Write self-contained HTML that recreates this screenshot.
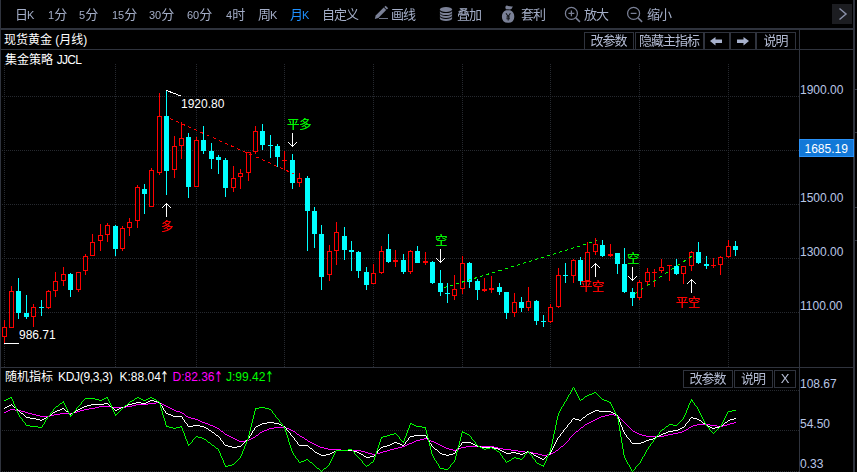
<!DOCTYPE html>
<html><head><meta charset="utf-8"><title>现货黄金 月线</title>
<style>
html,body{margin:0;padding:0;background:#000;}
#w{position:relative;width:857px;height:472px;background:#000;overflow:hidden;font-family:"Liberation Sans","Noto Sans CJK SC",sans-serif;font-size:12px;line-height:14px;color:#fff;}
#w svg{position:absolute;left:0;top:0;}
.t{position:absolute;white-space:nowrap;}
.tb,.bt,.g{will-change:transform;}
.g{text-shadow:0 0 0 currentColor;font-size:12.5px;letter-spacing:-0.5px;margin-top:-0.5px;}
.tb{color:#a4aec8;top:7.5px;font-size:13px;letter-spacing:-1px;}
.tb i{font-style:normal;font-size:11px;letter-spacing:0;}
.bt{position:absolute;top:32px;height:16px;border:1px solid #2f333d;color:#b4bcd4;text-align:center;line-height:16px;box-sizing:content-box;font-size:13px;letter-spacing:-1px;text-indent:-1px;}
.ax{position:absolute;left:800px;color:#b9c6e6;}
.ar{display:inline-block;font-family:'DejaVu Sans',sans-serif;font-size:15px;transform:scaleX(.7);transform-origin:0 50%;width:6px;position:relative;top:0.5px;left:-0.5px;line-height:10px}
</style></head><body><div id="w">

<svg width="857" height="472" viewBox="0 0 857 472" shape-rendering="crispEdges"><g stroke="#26292f" stroke-width="1" stroke-dasharray="1 1" fill="none">
<line x1="2" y1="96.5" x2="799" y2="96.5"/>
<line x1="2" y1="150.5" x2="799" y2="150.5"/>
<line x1="2" y1="204.5" x2="799" y2="204.5"/>
<line x1="2" y1="258.5" x2="799" y2="258.5"/>
<line x1="2" y1="312.5" x2="799" y2="312.5"/>
<line x1="2" y1="390.5" x2="799" y2="390.5"/>
<line x1="2" y1="430.5" x2="799" y2="430.5"/>
<line x1="2" y1="471.5" x2="799" y2="471.5"/>
<line x1="4.5" y1="64" x2="4.5" y2="367"/>
<line x1="115.5" y1="64" x2="115.5" y2="367"/>
<line x1="196.5" y1="64" x2="196.5" y2="367"/>
<line x1="284.5" y1="64" x2="284.5" y2="367"/>
<line x1="373.5" y1="64" x2="373.5" y2="367"/>
<line x1="462.5" y1="64" x2="462.5" y2="367"/>
<line x1="550.5" y1="64" x2="550.5" y2="367"/>
<line x1="639.5" y1="64" x2="639.5" y2="367"/>
<line x1="728.5" y1="64" x2="728.5" y2="367"/>
</g>
<rect x="0" y="0" width="1" height="472" fill="#2f333d" />
<rect x="0" y="28" width="855" height="2" fill="#2f333d" />
<rect x="0" y="49" width="854" height="1" fill="#2f333d" />
<rect x="0" y="367" width="854" height="1" fill="#2f333d" />
<rect x="799" y="30" width="1" height="442" fill="#2f333d" />
<rect x="853" y="0" width="2" height="472" fill="#2f333d" />
<rect x="855" y="89" width="2" height="1" fill="#2f333d" />
<rect x="855" y="132" width="2" height="1" fill="#2f333d" />
<rect x="855" y="207" width="2" height="1" fill="#2f333d" />
<rect x="855" y="240" width="2" height="1" fill="#2f333d" />
<rect x="4" y="320" width="1" height="23" fill="#ff0000" />
<rect x="2" y="327" width="5" height="10" fill="#ff0000" />
<rect x="3" y="328" width="3" height="8" fill="#000" />
<rect x="11" y="286" width="1" height="42" fill="#ff0000" />
<rect x="9" y="291" width="5" height="37" fill="#ff0000" />
<rect x="10" y="292" width="3" height="35" fill="#000" />
<rect x="18" y="278" width="1" height="41" fill="#00ffff" />
<rect x="16" y="291" width="5" height="22" fill="#00ffff" />
<rect x="26" y="295" width="1" height="24" fill="#00ffff" />
<rect x="24" y="313" width="5" height="4" fill="#00ffff" />
<rect x="33" y="304" width="1" height="23" fill="#ff0000" />
<rect x="31" y="307" width="5" height="10" fill="#ff0000" />
<rect x="32" y="308" width="3" height="8" fill="#000" />
<rect x="41" y="300" width="1" height="16" fill="#00ffff" />
<rect x="39" y="307" width="5" height="1" fill="#00ffff" />
<rect x="48" y="290" width="1" height="19" fill="#ff0000" />
<rect x="46" y="291" width="5" height="17" fill="#ff0000" />
<rect x="47" y="292" width="3" height="15" fill="#000" />
<rect x="55" y="272" width="1" height="25" fill="#ff0000" />
<rect x="53" y="281" width="5" height="10" fill="#ff0000" />
<rect x="54" y="282" width="3" height="8" fill="#000" />
<rect x="63" y="267" width="1" height="19" fill="#ff0000" />
<rect x="61" y="274" width="5" height="7" fill="#ff0000" />
<rect x="62" y="275" width="3" height="5" fill="#000" />
<rect x="70" y="273" width="1" height="24" fill="#00ffff" />
<rect x="68" y="274" width="5" height="16" fill="#00ffff" />
<rect x="78" y="272" width="1" height="20" fill="#ff0000" />
<rect x="76" y="272" width="5" height="18" fill="#ff0000" />
<rect x="77" y="273" width="3" height="16" fill="#000" />
<rect x="85" y="254" width="1" height="21" fill="#ff0000" />
<rect x="83" y="256" width="5" height="15" fill="#ff0000" />
<rect x="84" y="257" width="3" height="13" fill="#000" />
<rect x="92" y="234" width="1" height="22" fill="#ff0000" />
<rect x="90" y="242" width="5" height="14" fill="#ff0000" />
<rect x="91" y="243" width="3" height="12" fill="#000" />
<rect x="100" y="224" width="1" height="27" fill="#ff0000" />
<rect x="98" y="235" width="5" height="6" fill="#ff0000" />
<rect x="99" y="236" width="3" height="4" fill="#000" />
<rect x="107" y="223" width="1" height="19" fill="#ff0000" />
<rect x="105" y="225" width="5" height="10" fill="#ff0000" />
<rect x="106" y="226" width="3" height="8" fill="#000" />
<rect x="115" y="225" width="1" height="31" fill="#00ffff" />
<rect x="113" y="226" width="5" height="23" fill="#00ffff" />
<rect x="122" y="226" width="1" height="25" fill="#ff0000" />
<rect x="120" y="228" width="5" height="21" fill="#ff0000" />
<rect x="121" y="229" width="3" height="19" fill="#000" />
<rect x="129" y="218" width="1" height="18" fill="#ff0000" />
<rect x="127" y="222" width="5" height="6" fill="#ff0000" />
<rect x="128" y="223" width="3" height="4" fill="#000" />
<rect x="137" y="185" width="1" height="43" fill="#ff0000" />
<rect x="135" y="187" width="5" height="34" fill="#ff0000" />
<rect x="136" y="188" width="3" height="32" fill="#000" />
<rect x="144" y="184" width="1" height="30" fill="#00ffff" />
<rect x="142" y="189" width="5" height="5" fill="#00ffff" />
<rect x="151" y="168" width="1" height="39" fill="#ff0000" />
<rect x="149" y="170" width="5" height="37" fill="#ff0000" />
<rect x="150" y="171" width="3" height="35" fill="#000" />
<rect x="159" y="93" width="1" height="82" fill="#ff0000" />
<rect x="157" y="116" width="5" height="57" fill="#ff0000" />
<rect x="158" y="117" width="3" height="55" fill="#000" />
<rect x="166" y="90" width="1" height="105" fill="#00ffff" />
<rect x="164" y="116" width="5" height="55" fill="#00ffff" />
<rect x="174" y="136" width="1" height="42" fill="#ff0000" />
<rect x="172" y="146" width="5" height="24" fill="#ff0000" />
<rect x="173" y="147" width="3" height="22" fill="#000" />
<rect x="181" y="122" width="1" height="37" fill="#ff0000" />
<rect x="179" y="138" width="5" height="8" fill="#ff0000" />
<rect x="180" y="139" width="3" height="6" fill="#000" />
<rect x="188" y="133" width="1" height="65" fill="#00ffff" />
<rect x="186" y="137" width="5" height="50" fill="#00ffff" />
<rect x="196" y="137" width="1" height="50" fill="#ff0000" />
<rect x="194" y="140" width="5" height="47" fill="#ff0000" />
<rect x="195" y="141" width="3" height="45" fill="#000" />
<rect x="203" y="126" width="1" height="28" fill="#00ffff" />
<rect x="201" y="140" width="5" height="11" fill="#00ffff" />
<rect x="211" y="143" width="1" height="26" fill="#00ffff" />
<rect x="209" y="151" width="5" height="8" fill="#00ffff" />
<rect x="218" y="155" width="1" height="19" fill="#00ffff" />
<rect x="216" y="157" width="5" height="3" fill="#00ffff" />
<rect x="225" y="158" width="1" height="39" fill="#00ffff" />
<rect x="223" y="160" width="5" height="28" fill="#00ffff" />
<rect x="233" y="166" width="1" height="26" fill="#ff0000" />
<rect x="231" y="178" width="5" height="10" fill="#ff0000" />
<rect x="232" y="179" width="3" height="8" fill="#000" />
<rect x="240" y="169" width="1" height="20" fill="#ff0000" />
<rect x="238" y="173" width="5" height="4" fill="#ff0000" />
<rect x="239" y="174" width="3" height="2" fill="#000" />
<rect x="248" y="152" width="1" height="29" fill="#ff0000" />
<rect x="246" y="152" width="5" height="21" fill="#ff0000" />
<rect x="247" y="153" width="3" height="19" fill="#000" />
<rect x="255" y="126" width="1" height="28" fill="#ff0000" />
<rect x="253" y="131" width="5" height="21" fill="#ff0000" />
<rect x="254" y="132" width="3" height="19" fill="#000" />
<rect x="262" y="124" width="1" height="26" fill="#00ffff" />
<rect x="260" y="131" width="5" height="14" fill="#00ffff" />
<rect x="270" y="135" width="1" height="23" fill="#00ffff" />
<rect x="268" y="145" width="5" height="1" fill="#00ffff" />
<rect x="277" y="144" width="1" height="23" fill="#00ffff" />
<rect x="275" y="146" width="5" height="11" fill="#00ffff" />
<rect x="284" y="151" width="1" height="19" fill="#ff0000" />
<rect x="282" y="160" width="5" height="1" fill="#ff0000" />
<rect x="292" y="154" width="1" height="35" fill="#00ffff" />
<rect x="290" y="160" width="5" height="23" fill="#00ffff" />
<rect x="299" y="173" width="1" height="14" fill="#ff0000" />
<rect x="297" y="178" width="5" height="5" fill="#ff0000" />
<rect x="298" y="179" width="3" height="3" fill="#000" />
<rect x="307" y="176" width="1" height="75" fill="#00ffff" />
<rect x="305" y="178" width="5" height="33" fill="#00ffff" />
<rect x="314" y="207" width="1" height="41" fill="#00ffff" />
<rect x="312" y="211" width="5" height="23" fill="#00ffff" />
<rect x="321" y="225" width="1" height="65" fill="#00ffff" />
<rect x="319" y="234" width="5" height="43" fill="#00ffff" />
<rect x="329" y="245" width="1" height="36" fill="#ff0000" />
<rect x="327" y="251" width="5" height="24" fill="#ff0000" />
<rect x="328" y="252" width="3" height="22" fill="#000" />
<rect x="336" y="222" width="1" height="43" fill="#ff0000" />
<rect x="334" y="232" width="5" height="19" fill="#ff0000" />
<rect x="335" y="233" width="3" height="17" fill="#000" />
<rect x="344" y="227" width="1" height="33" fill="#00ffff" />
<rect x="342" y="236" width="5" height="14" fill="#00ffff" />
<rect x="351" y="241" width="1" height="30" fill="#00ffff" />
<rect x="349" y="250" width="5" height="2" fill="#00ffff" />
<rect x="358" y="251" width="1" height="27" fill="#00ffff" />
<rect x="356" y="252" width="5" height="19" fill="#00ffff" />
<rect x="366" y="267" width="1" height="23" fill="#00ffff" />
<rect x="364" y="272" width="5" height="13" fill="#00ffff" />
<rect x="373" y="264" width="1" height="20" fill="#ff0000" />
<rect x="371" y="273" width="5" height="11" fill="#ff0000" />
<rect x="372" y="274" width="3" height="9" fill="#000" />
<rect x="381" y="246" width="1" height="28" fill="#ff0000" />
<rect x="379" y="251" width="5" height="22" fill="#ff0000" />
<rect x="380" y="252" width="3" height="20" fill="#000" />
<rect x="388" y="234" width="1" height="29" fill="#00ffff" />
<rect x="386" y="249" width="5" height="13" fill="#00ffff" />
<rect x="395" y="250" width="1" height="17" fill="#ff0000" />
<rect x="393" y="260" width="5" height="2" fill="#ff0000" />
<rect x="403" y="254" width="1" height="20" fill="#00ffff" />
<rect x="401" y="260" width="5" height="12" fill="#00ffff" />
<rect x="410" y="250" width="1" height="24" fill="#ff0000" />
<rect x="408" y="251" width="5" height="21" fill="#ff0000" />
<rect x="409" y="252" width="3" height="19" fill="#000" />
<rect x="417" y="246" width="1" height="17" fill="#00ffff" />
<rect x="415" y="251" width="5" height="12" fill="#00ffff" />
<rect x="425" y="252" width="1" height="13" fill="#ff0000" />
<rect x="423" y="261" width="5" height="2" fill="#ff0000" />
<rect x="432" y="261" width="1" height="23" fill="#00ffff" />
<rect x="430" y="262" width="5" height="21" fill="#00ffff" />
<rect x="440" y="270" width="1" height="26" fill="#00ffff" />
<rect x="438" y="283" width="5" height="9" fill="#00ffff" />
<rect x="447" y="283" width="1" height="20" fill="#00ffff" />
<rect x="445" y="293" width="5" height="1" fill="#00ffff" />
<rect x="454" y="275" width="1" height="25" fill="#ff0000" />
<rect x="452" y="289" width="5" height="7" fill="#ff0000" />
<rect x="453" y="290" width="3" height="5" fill="#000" />
<rect x="462" y="256" width="1" height="38" fill="#ff0000" />
<rect x="460" y="263" width="5" height="26" fill="#ff0000" />
<rect x="461" y="264" width="3" height="24" fill="#000" />
<rect x="469" y="262" width="1" height="26" fill="#00ffff" />
<rect x="467" y="263" width="5" height="19" fill="#00ffff" />
<rect x="477" y="279" width="1" height="21" fill="#00ffff" />
<rect x="475" y="281" width="5" height="9" fill="#00ffff" />
<rect x="484" y="278" width="1" height="14" fill="#ff0000" />
<rect x="482" y="289" width="5" height="2" fill="#ff0000" />
<rect x="491" y="276" width="1" height="17" fill="#ff0000" />
<rect x="489" y="288" width="5" height="2" fill="#ff0000" />
<rect x="499" y="283" width="1" height="12" fill="#00ffff" />
<rect x="497" y="287" width="5" height="5" fill="#00ffff" />
<rect x="506" y="292" width="1" height="27" fill="#00ffff" />
<rect x="504" y="292" width="5" height="21" fill="#00ffff" />
<rect x="514" y="293" width="1" height="24" fill="#ff0000" />
<rect x="512" y="302" width="5" height="11" fill="#ff0000" />
<rect x="513" y="303" width="3" height="9" fill="#000" />
<rect x="521" y="297" width="1" height="15" fill="#00ffff" />
<rect x="519" y="302" width="5" height="6" fill="#00ffff" />
<rect x="528" y="287" width="1" height="24" fill="#ff0000" />
<rect x="526" y="301" width="5" height="7" fill="#ff0000" />
<rect x="527" y="302" width="3" height="5" fill="#000" />
<rect x="536" y="300" width="1" height="25" fill="#00ffff" />
<rect x="534" y="301" width="5" height="20" fill="#00ffff" />
<rect x="543" y="315" width="1" height="12" fill="#00ffff" />
<rect x="541" y="321" width="5" height="1" fill="#00ffff" />
<rect x="550" y="304" width="1" height="19" fill="#ff0000" />
<rect x="548" y="307" width="5" height="15" fill="#ff0000" />
<rect x="549" y="308" width="3" height="13" fill="#000" />
<rect x="558" y="268" width="1" height="40" fill="#ff0000" />
<rect x="556" y="275" width="5" height="32" fill="#ff0000" />
<rect x="557" y="276" width="3" height="30" fill="#000" />
<rect x="565" y="263" width="1" height="20" fill="#00ffff" />
<rect x="563" y="275" width="5" height="1" fill="#00ffff" />
<rect x="573" y="259" width="1" height="24" fill="#ff0000" />
<rect x="571" y="260" width="5" height="16" fill="#ff0000" />
<rect x="572" y="261" width="3" height="14" fill="#000" />
<rect x="580" y="257" width="1" height="28" fill="#00ffff" />
<rect x="578" y="260" width="5" height="21" fill="#00ffff" />
<rect x="587" y="242" width="1" height="39" fill="#ff0000" />
<rect x="585" y="252" width="5" height="29" fill="#ff0000" />
<rect x="586" y="253" width="3" height="27" fill="#000" />
<rect x="595" y="238" width="1" height="17" fill="#ff0000" />
<rect x="593" y="244" width="5" height="8" fill="#ff0000" />
<rect x="594" y="245" width="3" height="6" fill="#000" />
<rect x="602" y="240" width="1" height="17" fill="#00ffff" />
<rect x="600" y="245" width="5" height="11" fill="#00ffff" />
<rect x="610" y="244" width="1" height="13" fill="#ff0000" />
<rect x="608" y="254" width="5" height="2" fill="#ff0000" />
<rect x="617" y="253" width="1" height="21" fill="#00ffff" />
<rect x="615" y="253" width="5" height="11" fill="#00ffff" />
<rect x="624" y="248" width="1" height="45" fill="#00ffff" />
<rect x="622" y="264" width="5" height="28" fill="#00ffff" />
<rect x="632" y="288" width="1" height="18" fill="#00ffff" />
<rect x="630" y="292" width="5" height="6" fill="#00ffff" />
<rect x="639" y="280" width="1" height="20" fill="#ff0000" />
<rect x="637" y="282" width="5" height="16" fill="#ff0000" />
<rect x="638" y="283" width="3" height="14" fill="#000" />
<rect x="647" y="268" width="1" height="17" fill="#ff0000" />
<rect x="645" y="272" width="5" height="10" fill="#ff0000" />
<rect x="646" y="273" width="3" height="8" fill="#000" />
<rect x="654" y="269" width="1" height="18" fill="#ff0000" />
<rect x="652" y="272" width="5" height="1" fill="#ff0000" />
<rect x="661" y="259" width="1" height="14" fill="#ff0000" />
<rect x="659" y="267" width="5" height="4" fill="#ff0000" />
<rect x="660" y="268" width="3" height="2" fill="#000" />
<rect x="669" y="265" width="1" height="16" fill="#ff0000" />
<rect x="667" y="265" width="5" height="1" fill="#ff0000" />
<rect x="676" y="259" width="1" height="16" fill="#00ffff" />
<rect x="674" y="266" width="5" height="8" fill="#00ffff" />
<rect x="683" y="266" width="1" height="18" fill="#ff0000" />
<rect x="681" y="266" width="5" height="8" fill="#ff0000" />
<rect x="682" y="267" width="3" height="6" fill="#000" />
<rect x="691" y="251" width="1" height="20" fill="#ff0000" />
<rect x="689" y="252" width="5" height="14" fill="#ff0000" />
<rect x="690" y="253" width="3" height="12" fill="#000" />
<rect x="698" y="242" width="1" height="22" fill="#00ffff" />
<rect x="696" y="252" width="5" height="11" fill="#00ffff" />
<rect x="706" y="256" width="1" height="13" fill="#00ffff" />
<rect x="704" y="264" width="5" height="2" fill="#00ffff" />
<rect x="713" y="258" width="1" height="10" fill="#ff0000" />
<rect x="711" y="265" width="5" height="1" fill="#ff0000" />
<rect x="720" y="256" width="1" height="19" fill="#ff0000" />
<rect x="718" y="257" width="5" height="8" fill="#ff0000" />
<rect x="719" y="258" width="3" height="6" fill="#000" />
<rect x="728" y="240" width="1" height="18" fill="#ff0000" />
<rect x="726" y="246" width="5" height="11" fill="#ff0000" />
<rect x="727" y="247" width="3" height="9" fill="#000" />
<rect x="735" y="241" width="1" height="15" fill="#00ffff" />
<rect x="733" y="246" width="5" height="4" fill="#00ffff" />
<line x1="170" y1="118.5" x2="294" y2="173.9" stroke="#ff0000" stroke-width="1" stroke-dasharray="3 3.7"/>
<line x1="444" y1="287.7" x2="597" y2="240.7" stroke="#00ff00" stroke-width="1" stroke-dasharray="3 3.34"/>
<line x1="635" y1="293.5" x2="692" y2="256" stroke="#00ff00" stroke-width="1" stroke-dasharray="3 4.25"/>
<g stroke="#fff" stroke-width="1" fill="none">
<polyline points="166.5,91 166.5,90.5 181,96"/>
<line x1="4" y1="343.5" x2="19" y2="343.5"/>
<path d="M166.5 203 V217 M162 208 L166.5 203.5 L171 208"/>
<path d="M595.5 263 V277 M591 268 L595.5 263.5 L600 268"/>
<path d="M691.5 279 V293 M687 284 L691.5 279.5 L696 284"/>
<path d="M292.5 133 V147 M288 142 L292.5 146.5 L297 142"/>
<path d="M440.5 249 V263 M436 258 L440.5 262.5 L445 258"/>
<path d="M632.5 267 V281 M628 276 L632.5 280.5 L637 276"/>
</g>
<path fill="#ff00ff" d="M320 447h4v1h-4zM398 447h4v1h-4zM444 447h2v1h-2zM461 447h5v1h-5zM494 447h4v1h-4zM217 428h2v1h-2zM269 428h5v1h-5zM286 428h3v1h-3zM372 454h4v1h-4zM538 454h4v1h-4zM547 454h4v1h-4zM365 452h3v1h-3zM380 452h3v1h-3zM525 452h8v1h-8zM553 452h2v1h-2zM227 435h2v1h-2zM256 435h2v1h-2zM642 435h4v1h-4zM664 435h4v1h-4zM215 427h2v1h-2zM274 427h12v1h-12zM581 427h2v1h-2zM689 427h2v1h-2zM36 415h4v1h-4zM50 415h4v1h-4zM605 415h4v1h-4zM614 415h4v1h-4zM6 411h2v1h-2zM21 411h4v1h-4zM77 411h3v1h-3zM176 411h4v1h-4zM10 409h5v1h-5zM84 409h5v1h-5zM172 409h2v1h-2zM324 448h4v1h-4zM394 448h4v1h-4zM446 448h3v1h-3zM459 448h2v1h-2zM498 448h5v1h-5zM341 450h20v1h-20zM387 450h3v1h-3zM453 450h3v1h-3zM511 450h7v1h-7zM556 450h2v1h-2zM239 441h6v1h-6zM308 441h2v1h-2zM414 441h2v1h-2zM431 441h3v1h-3zM318 446h2v1h-2zM402 446h3v1h-3zM442 446h2v1h-2zM466 446h28v1h-28zM561 446h2v1h-2zM89 408h6v1h-6zM170 408h2v1h-2zM136 404h12v1h-12zM162 404h2v1h-2zM32 414h4v1h-4zM54 414h6v1h-6zM609 414h5v1h-5zM95 407h4v1h-4zM112 407h14v1h-14zM168 407h2v1h-2zM328 449h13v1h-13zM390 449h4v1h-4zM449 449h4v1h-4zM456 449h3v1h-3zM503 449h8v1h-8zM28 413h4v1h-4zM60 413h13v1h-13zM182 413h2v1h-2zM195 419h3v1h-3zM595 419h2v1h-2zM148 403h8v1h-8zM160 403h2v1h-2zM237 440h2v1h-2zM245 440h4v1h-4zM416 440h4v1h-4zM429 440h2v1h-2zM99 406h13v1h-13zM126 406h6v1h-6zM166 406h2v1h-2zM208 424h2v1h-2zM585 424h2v1h-2zM697 424h13v1h-13zM727 424h3v1h-3zM260 432h2v1h-2zM635 432h2v1h-2zM678 432h4v1h-4zM235 439h2v1h-2zM249 439h2v1h-2zM305 439h2v1h-2zM420 439h4v1h-4zM427 439h2v1h-2zM4 412h2v1h-2zM25 412h3v1h-3zM73 412h4v1h-4zM180 412h2v1h-2zM156 402h4v1h-4zM200 421h2v1h-2zM591 421h2v1h-2zM188 417h3v1h-3zM599 417h2v1h-2zM542 455h5v1h-5zM40 416h10v1h-10zM186 416h2v1h-2zM601 416h4v1h-4zM210 425h3v1h-3zM693 425h4v1h-4zM710 425h7v1h-7zM723 425h4v1h-4zM225 434h2v1h-2zM297 434h2v1h-2zM639 434h3v1h-3zM668 434h5v1h-5zM8 410h2v1h-2zM15 410h6v1h-6zM80 410h4v1h-4zM174 410h2v1h-2zM267 429h2v1h-2zM289 429h2v1h-2zM686 429h2v1h-2zM368 453h4v1h-4zM376 453h4v1h-4zM533 453h5v1h-5zM551 453h2v1h-2zM229 436h2v1h-2zM300 436h2v1h-2zM646 436h18v1h-18zM637 433h2v1h-2zM673 433h5v1h-5zM310 442h2v1h-2zM412 442h2v1h-2zM434 442h2v1h-2zM361 451h4v1h-4zM383 451h4v1h-4zM518 451h7v1h-7zM202 422h3v1h-3zM589 422h2v1h-2zM734 422h2v1h-2zM205 423h3v1h-3zM587 423h2v1h-2zM730 423h4v1h-4zM213 426h2v1h-2zM691 426h2v1h-2zM717 426h6v1h-6zM314 444h2v1h-2zM407 444h2v1h-2zM438 444h2v1h-2zM221 431h2v1h-2zM262 431h2v1h-2zM293 431h2v1h-2zM576 431h2v1h-2zM633 431h2v1h-2zM682 431h2v1h-2zM316 445h2v1h-2zM405 445h2v1h-2zM440 445h2v1h-2zM233 438h2v1h-2zM251 438h2v1h-2zM424 438h3v1h-3zM231 437h2v1h-2zM253 437h2v1h-2zM302 437h2v1h-2zM264 430h3v1h-3zM291 430h2v1h-2zM684 430h2v1h-2zM312 443h2v1h-2zM409 443h3v1h-3zM436 443h2v1h-2zM191 418h4v1h-4zM597 418h2v1h-2zM132 405h4v1h-4zM164 405h2v1h-2zM198 420h2v1h-2zM593 420h2v1h-2zM184 414h1v1h-1zM185 415h1v1h-1zM219 429h1v1h-1zM220 430h1v1h-1zM223 432h1v1h-1zM224 433h1v1h-1zM255 436h1v1h-1zM258 434h1v1h-1zM259 433h1v1h-1zM295 432h1v1h-1zM296 433h1v1h-1zM299 435h1v1h-1zM304 438h1v1h-1zM307 440h1v1h-1zM555 451h1v1h-1zM558 449h1v1h-1zM559 448h1v1h-1zM560 447h1v1h-1zM563 445h1v1h-1zM564 444h1v1h-1zM565 443h1v1h-1zM566 442h1v1h-1zM567 441h1v1h-1zM568 440h1v1h-1zM569 438h1v2h-1zM570 437h1v1h-1zM571 436h1v1h-1zM572 435h1v1h-1zM573 434h1v1h-1zM574 433h1v1h-1zM575 432h1v1h-1zM578 430h1v1h-1zM579 429h1v1h-1zM580 428h1v1h-1zM583 426h1v1h-1zM584 425h1v1h-1zM618 416h1v1h-1zM619 417h1v1h-1zM620 418h1v1h-1zM621 419h1v1h-1zM622 420h1v1h-1zM623 421h1v1h-1zM624 422h1v1h-1zM625 423h1v1h-1zM626 424h1v1h-1zM627 425h1v1h-1zM628 426h1v1h-1zM629 427h1v1h-1zM630 428h1v1h-1zM631 429h1v1h-1zM632 430h1v1h-1zM688 428h1v1h-1z"/>
<path fill="#fff" d="M225 445h3v1h-3zM299 445h9v1h-9zM387 445h3v1h-3zM402 445h2v1h-2zM475 445h2v1h-2zM30 418h6v1h-6zM44 418h2v1h-2zM573 418h2v1h-2zM693 418h4v1h-4zM734 418h2v1h-2zM542 459h2v1h-2zM646 440h3v1h-3zM232 447h5v1h-5zM381 447h2v1h-2zM481 447h13v1h-13zM91 404h13v1h-13zM128 404h4v1h-4zM315 452h2v1h-2zM332 452h2v1h-2zM357 452h2v1h-2zM504 452h2v1h-2zM511 452h5v1h-5zM525 452h2v1h-2zM529 452h2v1h-2zM173 416h9v1h-9zM228 446h4v1h-4zM237 446h4v1h-4zM383 446h4v1h-4zM477 446h4v1h-4zM188 426h5v1h-5zM200 426h4v1h-4zM256 426h2v1h-2zM283 426h2v1h-2zM708 426h2v1h-2zM719 426h2v1h-2zM390 444h2v1h-2zM400 444h2v1h-2zM473 444h2v1h-2zM317 453h2v1h-2zM330 453h2v1h-2zM359 453h2v1h-2zM440 453h2v1h-2zM453 453h2v1h-2zM506 453h5v1h-5zM516 453h4v1h-4zM523 453h2v1h-2zM531 453h2v1h-2zM364 456h2v1h-2zM370 456h4v1h-4zM536 456h2v1h-2zM546 456h2v1h-2zM136 402h5v1h-5zM146 402h2v1h-2zM158 402h2v1h-2zM26 417h4v1h-4zM46 417h2v1h-2zM583 417h2v1h-2zM691 417h2v1h-2zM36 419h4v1h-4zM42 419h2v1h-2zM575 419h4v1h-4zM697 419h2v1h-2zM730 419h4v1h-4zM5 407h2v1h-2zM14 407h2v1h-2zM82 407h2v1h-2zM121 407h3v1h-3zM209 430h2v1h-2zM673 430h5v1h-5zM319 454h2v1h-2zM326 454h4v1h-4zM361 454h2v1h-2zM442 454h4v1h-4zM449 454h4v1h-4zM520 454h3v1h-3zM216 435h2v1h-2zM414 435h12v1h-12zM659 435h2v1h-2zM104 403h4v1h-4zM132 403h4v1h-4zM141 403h5v1h-5zM366 457h4v1h-4zM538 457h2v1h-2zM661 434h2v1h-2zM7 406h2v1h-2zM84 406h3v1h-3zM110 406h2v1h-2zM124 406h2v1h-2zM55 411h2v1h-2zM66 411h2v1h-2zM593 411h2v1h-2zM599 411h12v1h-12zM678 429h2v1h-2zM321 455h5v1h-5zM446 455h3v1h-3zM534 455h2v1h-2zM394 442h3v1h-3zM462 442h9v1h-9zM641 442h3v1h-3zM206 428h2v1h-2zM680 428h2v1h-2zM712 428h3v1h-3zM655 437h2v1h-2zM540 458h2v1h-2zM193 425h7v1h-7zM258 425h2v1h-2zM281 425h2v1h-2zM706 425h2v1h-2zM721 425h2v1h-2zM148 401h2v1h-2zM154 401h4v1h-4zM267 422h7v1h-7zM725 422h2v1h-2zM62 408h2v1h-2zM80 408h2v1h-2zM119 408h2v1h-2zM653 438h2v1h-2zM204 427h2v1h-2zM682 427h2v1h-2zM710 427h2v1h-2zM715 427h4v1h-4zM392 443h2v1h-2zM397 443h3v1h-3zM471 443h2v1h-2zM632 443h9v1h-9zM9 405h2v1h-2zM87 405h4v1h-4zM126 405h2v1h-2zM60 409h2v1h-2zM78 409h2v1h-2zM117 409h2v1h-2zM663 433h3v1h-3zM53 412h2v1h-2zM73 412h2v1h-2zM591 412h2v1h-2zM611 412h2v1h-2zM336 450h17v1h-17zM500 450h2v1h-2zM644 441h2v1h-2zM435 449h2v1h-2zM498 449h2v1h-2zM21 413h2v1h-2zM71 413h2v1h-2zM166 413h2v1h-2zM589 413h2v1h-2zM613 413h2v1h-2zM57 410h3v1h-3zM76 410h2v1h-2zM115 410h2v1h-2zM595 410h4v1h-4zM310 448h2v1h-2zM494 448h4v1h-4zM668 431h5v1h-5zM262 423h5v1h-5zM274 423h5v1h-5zM703 423h2v1h-2zM168 414h3v1h-3zM587 414h2v1h-2zM615 414h2v1h-2zM260 424h2v1h-2zM279 424h2v1h-2zM410 436h4v1h-4zM657 436h2v1h-2zM334 451h2v1h-2zM353 451h4v1h-4zM502 451h2v1h-2zM527 451h2v1h-2zM40 420h2v1h-2zM579 420h2v1h-2zM699 420h2v1h-2zM728 420h2v1h-2zM49 415h2v1h-2zM171 415h2v1h-2zM649 439h4v1h-4zM150 400h4v1h-4zM212 432h2v1h-2zM666 432h2v1h-2zM4 408h1v1h-1zM11 404h1v1h-1zM12 405h1v1h-1zM13 406h1v1h-1zM16 408h1v1h-1zM17 409h1v1h-1zM18 410h1v1h-1zM19 411h1v1h-1zM20 412h1v1h-1zM23 414h1v1h-1zM24 415h1v1h-1zM25 416h1v1h-1zM48 416h1v1h-1zM51 414h1v1h-1zM52 413h1v1h-1zM64 409h1v1h-1zM65 410h1v1h-1zM68 412h1v1h-1zM69 413h1v1h-1zM70 414h1v1h-1zM75 411h1v1h-1zM108 404h1v1h-1zM109 405h1v1h-1zM112 407h1v1h-1zM113 408h1v1h-1zM114 409h1v1h-1zM160 403h1v2h-1zM161 405h1v1h-1zM162 406h1v2h-1zM163 408h1v2h-1zM164 410h1v1h-1zM165 411h1v2h-1zM182 417h1v2h-1zM183 419h1v1h-1zM184 420h1v2h-1zM185 422h1v1h-1zM186 423h1v1h-1zM187 424h1v2h-1zM208 429h1v1h-1zM211 431h1v1h-1zM214 433h1v1h-1zM215 434h1v1h-1zM218 436h1v1h-1zM219 437h1v1h-1zM220 438h1v2h-1zM221 440h1v1h-1zM222 441h1v1h-1zM223 442h1v2h-1zM224 444h1v1h-1zM241 445h1v1h-1zM242 444h1v1h-1zM243 443h1v1h-1zM244 442h1v1h-1zM245 441h1v1h-1zM246 440h1v1h-1zM247 439h1v1h-1zM248 438h1v1h-1zM249 436h1v2h-1zM250 435h1v1h-1zM251 433h1v2h-1zM252 431h1v2h-1zM253 430h1v1h-1zM254 428h1v2h-1zM255 427h1v1h-1zM285 427h1v1h-1zM286 428h1v2h-1zM287 430h1v1h-1zM288 431h1v1h-1zM289 432h1v1h-1zM290 433h1v2h-1zM291 435h1v1h-1zM292 436h1v1h-1zM293 437h1v1h-1zM294 438h1v2h-1zM295 440h1v1h-1zM296 441h1v1h-1zM297 442h1v2h-1zM298 444h1v1h-1zM308 446h1v1h-1zM309 447h1v1h-1zM312 449h1v1h-1zM313 450h1v1h-1zM314 451h1v1h-1zM363 455h1v1h-1zM374 455h1v1h-1zM375 454h1v1h-1zM376 453h1v1h-1zM377 451h1v2h-1zM378 450h1v1h-1zM379 449h1v1h-1zM380 448h1v1h-1zM404 444h1v1h-1zM405 442h1v2h-1zM406 441h1v1h-1zM407 440h1v1h-1zM408 438h1v2h-1zM409 437h1v1h-1zM426 436h1v2h-1zM427 438h1v1h-1zM428 439h1v2h-1zM429 441h1v2h-1zM430 443h1v1h-1zM431 444h1v2h-1zM432 446h1v1h-1zM433 447h1v1h-1zM434 448h1v1h-1zM437 450h1v1h-1zM438 451h1v1h-1zM439 452h1v1h-1zM455 451h1v2h-1zM456 450h1v1h-1zM457 449h1v1h-1zM458 447h1v2h-1zM459 446h1v1h-1zM460 445h1v1h-1zM461 443h1v2h-1zM533 454h1v1h-1zM544 458h1v1h-1zM545 457h1v1h-1zM548 455h1v1h-1zM549 454h1v1h-1zM550 452h1v2h-1zM551 450h1v2h-1zM552 448h1v2h-1zM553 446h1v2h-1zM554 444h1v2h-1zM555 442h1v2h-1zM556 440h1v2h-1zM557 438h1v2h-1zM558 437h1v1h-1zM559 436h1v1h-1zM560 434h1v2h-1zM561 433h1v1h-1zM562 432h1v1h-1zM563 430h1v2h-1zM564 429h1v1h-1zM565 428h1v1h-1zM566 427h1v1h-1zM567 425h1v2h-1zM568 424h1v1h-1zM569 423h1v1h-1zM570 422h1v1h-1zM571 420h1v2h-1zM572 419h1v1h-1zM581 419h1v1h-1zM582 418h1v1h-1zM585 416h1v1h-1zM586 415h1v1h-1zM617 415h1v2h-1zM618 417h1v2h-1zM619 419h1v3h-1zM620 422h1v3h-1zM621 425h1v2h-1zM622 427h1v3h-1zM623 430h1v2h-1zM624 432h1v2h-1zM625 434h1v1h-1zM626 435h1v2h-1zM627 437h1v1h-1zM628 438h1v1h-1zM629 439h1v1h-1zM630 440h1v2h-1zM631 442h1v1h-1zM684 426h1v1h-1zM685 424h1v2h-1zM686 423h1v1h-1zM687 422h1v1h-1zM688 421h1v1h-1zM689 419h1v2h-1zM690 418h1v1h-1zM701 421h1v1h-1zM702 422h1v1h-1zM705 424h1v1h-1zM723 424h1v1h-1zM724 423h1v1h-1zM727 421h1v1h-1z"/>
<path fill="#00ff00" d="M269 409h2v1h-2zM56 406h2v1h-2zM514 457h2v1h-2zM336 450h12v1h-12zM6 399h2v1h-2zM95 399h4v1h-4zM102 399h2v1h-2zM141 399h2v1h-2zM146 399h2v1h-2zM154 399h2v1h-2zM581 399h2v1h-2zM602 399h2v1h-2zM480 447h2v1h-2zM490 447h2v1h-2zM394 433h2v1h-2zM465 433h2v1h-2zM212 445h2v1h-2zM188 444h2v1h-2zM62 402h2v1h-2zM609 402h2v1h-2zM125 405h2v1h-2zM732 410h4v1h-4zM30 426h8v1h-8zM166 426h3v1h-3zM180 426h2v1h-2zM416 426h6v1h-6zM666 426h2v1h-2zM255 408h4v1h-4zM265 408h4v1h-4zM10 397h2v1h-2zM106 397h2v1h-2zM137 397h2v1h-2zM150 397h2v1h-2zM38 427h4v1h-4zM169 427h4v1h-4zM176 427h4v1h-4zM422 427h4v1h-4zM348 449h4v1h-4zM484 449h2v1h-2zM494 449h2v1h-2zM259 407h6v1h-6zM592 393h2v1h-2zM70 415h2v1h-2zM26 425h4v1h-4zM414 425h2v1h-2zM673 425h4v1h-4zM8 398h2v1h-2zM85 398h10v1h-10zM104 398h2v1h-2zM135 398h2v1h-2zM139 398h2v1h-2zM148 398h2v1h-2zM152 398h2v1h-2zM130 401h2v1h-2zM157 401h2v1h-2zM607 401h2v1h-2zM196 436h2v1h-2zM383 436h4v1h-4zM232 464h2v1h-2zM539 464h2v1h-2zM216 448h2v1h-2zM482 448h2v1h-2zM486 448h4v1h-4zM492 448h2v1h-2zM402 441h2v1h-2zM537 463h2v1h-2zM228 465h4v1h-4zM367 465h2v1h-2zM541 465h3v1h-3zM412 424h2v1h-2zM669 424h4v1h-4zM225 466h3v1h-3zM662 429h2v1h-2zM589 394h3v1h-3zM512 458h2v1h-2zM516 458h4v1h-4zM497 451h2v1h-2zM390 434h4v1h-4zM467 434h2v1h-2zM301 461h3v1h-3zM507 461h2v1h-2zM304 460h2v1h-2zM509 460h2v1h-2zM173 428h3v1h-3zM478 446h2v1h-2zM115 414h2v1h-2zM306 459h2v1h-2zM520 459h2v1h-2zM208 442h2v1h-2zM387 435h3v1h-3zM202 438h2v1h-2zM4 400h2v1h-2zM99 400h3v1h-3zM132 400h2v1h-2zM143 400h3v1h-3zM604 400h3v1h-3zM691 400h2v1h-2zM728 411h4v1h-4zM198 437h4v1h-4zM381 437h2v1h-2zM204 439h2v1h-2zM410 423h2v1h-2zM317 468h2v1h-2zM324 468h2v1h-2zM440 468h4v1h-4zM462 432h3v1h-3zM299 462h2v1h-2zM310 462h2v1h-2zM371 462h2v1h-2zM594 392h2v1h-2zM60 403h2v1h-2zM444 469h4v1h-4zM585 396h2v1h-2zM587 395h2v1h-2zM11 398h1v1h-1zM12 399h1v2h-1zM13 401h1v3h-1zM14 404h1v2h-1zM15 406h1v2h-1zM16 408h1v3h-1zM17 411h1v2h-1zM18 413h1v2h-1zM19 415h1v2h-1zM20 417h1v1h-1zM21 418h1v1h-1zM22 419h1v2h-1zM23 421h1v1h-1zM24 422h1v1h-1zM25 423h1v2h-1zM42 425h1v2h-1zM43 424h1v1h-1zM44 422h1v2h-1zM45 420h1v2h-1zM46 419h1v1h-1zM47 417h1v2h-1zM48 416h1v1h-1zM49 415h1v1h-1zM50 413h1v2h-1zM51 412h1v1h-1zM52 411h1v1h-1zM53 409h1v2h-1zM54 408h1v1h-1zM55 407h1v1h-1zM58 405h1v1h-1zM59 404h1v1h-1zM63 401h1v1h-1zM64 403h1v2h-1zM65 405h1v2h-1zM66 407h1v2h-1zM67 409h1v2h-1zM68 411h1v2h-1zM69 413h1v2h-1zM70 416h1v1h-1zM72 413h1v2h-1zM73 412h1v1h-1zM74 411h1v1h-1zM75 410h1v1h-1zM76 408h1v2h-1zM77 407h1v1h-1zM78 406h1v1h-1zM79 405h1v1h-1zM80 404h1v1h-1zM81 402h1v2h-1zM82 401h1v1h-1zM83 400h1v1h-1zM84 399h1v1h-1zM107 398h1v1h-1zM108 399h1v2h-1zM109 401h1v2h-1zM110 403h1v2h-1zM111 405h1v3h-1zM112 408h1v2h-1zM113 410h1v2h-1zM114 412h1v2h-1zM115 415h1v1h-1zM117 413h1v1h-1zM118 412h1v1h-1zM119 411h1v1h-1zM120 410h1v1h-1zM121 409h1v1h-1zM122 408h1v1h-1zM123 407h1v1h-1zM124 406h1v1h-1zM127 404h1v1h-1zM128 403h1v1h-1zM129 402h1v1h-1zM134 399h1v1h-1zM156 400h1v1h-1zM159 402h1v2h-1zM160 404h1v4h-1zM161 408h1v3h-1zM162 411h1v4h-1zM163 415h1v3h-1zM164 418h1v3h-1zM165 421h1v4h-1zM166 425h1v1h-1zM181 427h1v1h-1zM182 428h1v3h-1zM183 431h1v2h-1zM184 433h1v3h-1zM185 436h1v3h-1zM186 439h1v2h-1zM187 441h1v3h-1zM188 445h1v1h-1zM190 443h1v1h-1zM191 442h1v1h-1zM192 440h1v2h-1zM193 439h1v1h-1zM194 438h1v1h-1zM195 437h1v1h-1zM206 440h1v1h-1zM207 441h1v1h-1zM210 443h1v1h-1zM211 444h1v1h-1zM214 446h1v1h-1zM215 447h1v1h-1zM218 449h1v2h-1zM219 451h1v2h-1zM220 453h1v3h-1zM221 456h1v2h-1zM222 458h1v2h-1zM223 460h1v3h-1zM224 463h1v2h-1zM225 465h1v1h-1zM234 463h1v1h-1zM235 462h1v1h-1zM236 461h1v1h-1zM237 460h1v1h-1zM238 459h1v1h-1zM239 458h1v1h-1zM240 456h1v2h-1zM241 454h1v2h-1zM242 451h1v3h-1zM243 449h1v2h-1zM244 446h1v3h-1zM245 444h1v2h-1zM246 441h1v3h-1zM247 439h1v2h-1zM248 435h1v4h-1zM249 431h1v4h-1zM250 427h1v4h-1zM251 423h1v4h-1zM252 419h1v4h-1zM253 415h1v4h-1zM254 411h1v4h-1zM255 409h1v2h-1zM271 410h1v1h-1zM272 411h1v2h-1zM273 413h1v1h-1zM274 414h1v1h-1zM275 415h1v2h-1zM276 417h1v1h-1zM277 418h1v1h-1zM278 419h1v1h-1zM279 420h1v2h-1zM280 422h1v1h-1zM281 423h1v1h-1zM282 424h1v2h-1zM283 426h1v1h-1zM284 427h1v2h-1zM285 429h1v3h-1zM286 432h1v3h-1zM287 435h1v3h-1zM288 438h1v4h-1zM289 442h1v3h-1zM290 445h1v3h-1zM291 448h1v3h-1zM292 451h1v2h-1zM293 453h1v2h-1zM294 455h1v1h-1zM295 456h1v2h-1zM296 458h1v1h-1zM297 459h1v1h-1zM298 460h1v2h-1zM308 460h1v1h-1zM309 461h1v1h-1zM312 463h1v1h-1zM313 464h1v1h-1zM314 465h1v1h-1zM315 466h1v1h-1zM316 467h1v1h-1zM319 469h1v1h-1zM320 470h1v1h-1zM321 471h1v1h-1zM322 470h1v1h-1zM323 469h1v1h-1zM326 467h1v1h-1zM327 466h1v1h-1zM328 465h1v1h-1zM329 463h1v2h-1zM330 461h1v2h-1zM331 459h1v2h-1zM332 457h1v2h-1zM333 455h1v2h-1zM334 453h1v2h-1zM335 451h1v2h-1zM352 450h1v1h-1zM353 451h1v1h-1zM354 452h1v2h-1zM355 454h1v1h-1zM356 455h1v1h-1zM357 456h1v1h-1zM358 457h1v1h-1zM359 458h1v1h-1zM360 459h1v1h-1zM361 460h1v1h-1zM362 461h1v2h-1zM363 463h1v1h-1zM364 464h1v1h-1zM365 465h1v1h-1zM366 466h1v1h-1zM369 464h1v1h-1zM370 463h1v1h-1zM373 460h1v2h-1zM374 457h1v3h-1zM375 454h1v3h-1zM376 451h1v3h-1zM377 448h1v3h-1zM378 445h1v3h-1zM379 442h1v3h-1zM380 439h1v3h-1zM381 438h1v1h-1zM396 434h1v1h-1zM397 435h1v1h-1zM398 436h1v1h-1zM399 437h1v2h-1zM400 439h1v1h-1zM401 440h1v1h-1zM403 442h1v1h-1zM404 438h1v3h-1zM405 436h1v2h-1zM406 433h1v3h-1zM407 430h1v3h-1zM408 428h1v2h-1zM409 425h1v3h-1zM410 424h1v1h-1zM425 428h1v2h-1zM426 430h1v4h-1zM427 434h1v4h-1zM428 438h1v4h-1zM429 442h1v4h-1zM430 446h1v4h-1zM431 450h1v4h-1zM432 454h1v2h-1zM433 456h1v2h-1zM434 458h1v2h-1zM435 460h1v1h-1zM436 461h1v2h-1zM437 463h1v1h-1zM438 464h1v2h-1zM439 466h1v2h-1zM448 468h1v1h-1zM449 467h1v1h-1zM450 465h1v2h-1zM451 464h1v1h-1zM452 463h1v1h-1zM453 462h1v1h-1zM454 460h1v2h-1zM455 456h1v4h-1zM456 452h1v4h-1zM457 448h1v4h-1zM458 445h1v3h-1zM459 441h1v4h-1zM460 437h1v4h-1zM461 433h1v4h-1zM462 431h1v1h-1zM469 435h1v1h-1zM470 436h1v1h-1zM471 437h1v2h-1zM472 439h1v1h-1zM473 440h1v1h-1zM474 441h1v1h-1zM475 442h1v2h-1zM476 444h1v1h-1zM477 445h1v1h-1zM496 450h1v1h-1zM499 452h1v1h-1zM500 453h1v2h-1zM501 455h1v1h-1zM502 456h1v2h-1zM503 458h1v1h-1zM504 459h1v1h-1zM505 460h1v2h-1zM506 462h1v1h-1zM511 459h1v1h-1zM522 458h1v1h-1zM523 457h1v1h-1zM524 455h1v2h-1zM525 454h1v1h-1zM526 453h1v1h-1zM527 452h1v1h-1zM528 451h1v1h-1zM529 452h1v2h-1zM530 454h1v1h-1zM531 455h1v1h-1zM532 456h1v2h-1zM533 458h1v1h-1zM534 459h1v1h-1zM535 460h1v2h-1zM536 462h1v1h-1zM543 466h1v1h-1zM544 463h1v2h-1zM545 461h1v2h-1zM546 458h1v3h-1zM547 456h1v2h-1zM548 454h1v2h-1zM549 452h1v2h-1zM550 448h1v4h-1zM551 444h1v4h-1zM552 439h1v5h-1zM553 434h1v5h-1zM554 430h1v4h-1zM555 425h1v5h-1zM556 420h1v5h-1zM557 416h1v4h-1zM558 413h1v3h-1zM559 411h1v2h-1zM560 409h1v2h-1zM561 407h1v2h-1zM562 406h1v1h-1zM563 404h1v2h-1zM564 402h1v2h-1zM565 401h1v1h-1zM566 399h1v2h-1zM567 397h1v2h-1zM568 395h1v2h-1zM569 394h1v1h-1zM570 392h1v2h-1zM571 390h1v2h-1zM572 388h1v2h-1zM573 387h1v1h-1zM574 388h1v2h-1zM575 390h1v2h-1zM576 392h1v2h-1zM577 394h1v2h-1zM578 396h1v2h-1zM579 398h1v2h-1zM580 400h1v1h-1zM583 398h1v1h-1zM584 397h1v1h-1zM596 393h1v1h-1zM597 394h1v1h-1zM598 395h1v1h-1zM599 396h1v1h-1zM600 397h1v1h-1zM601 398h1v1h-1zM610 403h1v1h-1zM611 404h1v2h-1zM612 406h1v2h-1zM613 408h1v2h-1zM614 410h1v2h-1zM615 412h1v2h-1zM616 414h1v2h-1zM617 416h1v3h-1zM618 419h1v6h-1zM619 425h1v6h-1zM620 431h1v6h-1zM621 437h1v6h-1zM622 443h1v6h-1zM623 449h1v6h-1zM624 455h1v3h-1zM625 458h1v2h-1zM626 460h1v2h-1zM627 462h1v2h-1zM628 464h1v1h-1zM629 465h1v2h-1zM630 467h1v2h-1zM631 469h1v2h-1zM632 471h1v1h-1zM633 470h1v1h-1zM634 469h1v1h-1zM635 467h1v2h-1zM636 466h1v1h-1zM637 465h1v1h-1zM638 464h1v1h-1zM639 463h1v1h-1zM640 461h1v2h-1zM641 459h1v2h-1zM642 457h1v2h-1zM643 456h1v1h-1zM644 454h1v2h-1zM645 452h1v2h-1zM646 450h1v2h-1zM647 449h1v1h-1zM648 447h1v2h-1zM649 446h1v1h-1zM650 444h1v2h-1zM651 443h1v1h-1zM652 442h1v1h-1zM653 440h1v2h-1zM654 439h1v1h-1zM655 438h1v1h-1zM656 436h1v2h-1zM657 435h1v1h-1zM658 434h1v1h-1zM659 432h1v2h-1zM660 431h1v1h-1zM661 430h1v1h-1zM664 428h1v1h-1zM665 427h1v1h-1zM668 425h1v1h-1zM677 424h1v1h-1zM678 423h1v1h-1zM679 422h1v1h-1zM680 421h1v1h-1zM681 420h1v1h-1zM682 419h1v1h-1zM683 417h1v2h-1zM684 415h1v2h-1zM685 413h1v2h-1zM686 410h1v3h-1zM687 408h1v2h-1zM688 405h1v3h-1zM689 403h1v2h-1zM690 401h1v2h-1zM691 399h1v1h-1zM692 401h1v1h-1zM693 402h1v1h-1zM694 403h1v2h-1zM695 405h1v1h-1zM696 406h1v1h-1zM697 407h1v2h-1zM698 409h1v2h-1zM699 411h1v2h-1zM700 413h1v2h-1zM701 415h1v2h-1zM702 417h1v2h-1zM703 419h1v2h-1zM704 421h1v2h-1zM705 423h1v2h-1zM706 425h1v1h-1zM707 426h1v1h-1zM708 427h1v1h-1zM709 428h1v2h-1zM710 430h1v1h-1zM711 431h1v1h-1zM712 432h1v1h-1zM713 433h1v1h-1zM714 432h1v1h-1zM715 431h1v1h-1zM716 430h1v1h-1zM717 429h1v1h-1zM718 428h1v1h-1zM719 427h1v1h-1zM720 426h1v1h-1zM721 424h1v2h-1zM722 422h1v2h-1zM723 420h1v2h-1zM724 418h1v2h-1zM725 416h1v2h-1zM726 414h1v2h-1zM727 412h1v2h-1z"/>
<rect x="799" y="139" width="55" height="18" fill="#2a92f8" />
<rect x="800" y="140" width="53" height="16" fill="#1278d7" /></svg>
<svg width="857" height="472" viewBox="0 0 857 472"><g fill="#7a8096"><path d="M374.8 19 L375.7 15.4 L383.7 7.6 L386.2 10.1 L378.3 18.1 Z"/><path d="M384.3 7 L385.7 5.7 L388.2 8.3 L386.8 9.6 Z"/><rect x="379" y="18" width="9" height="0.9"/></g>
<g fill="#7a8096"><ellipse cx="446" cy="9.4" rx="6.1" ry="2.5"/><path d="M439.9 10.7 a6.1 2.4 0 0 0 12.2 0 v2 a6.1 2.4 0 0 1 -12.2 0 z"/><path d="M439.9 13.6 a6.1 2.4 0 0 0 12.2 0 v2 a6.1 2.4 0 0 1 -12.2 0 z"/><path d="M439.9 16.5 a6.1 2.4 0 0 0 12.2 0 v2 a6.1 2.4 0 0 1 -12.2 0 z"/></g>
<g fill="#7a8096"><path d="M505.8 9.3 L505.3 7 Q506.4 4.6 508.3 6.1 Q510.5 6.7 512.9 6.5 Q512 9 510 9.5 Z"/><path d="M506 10.3 h4.2 q4.1 1.8 4.1 6.5 q0 6 -6.2 6 q-6.2 0 -6.2 -6 q0 -4.7 4.1 -6.5 z"/></g><path d="M506 13.3 l2.2 3.2 l2.2 -3.2 M508.2 16.5 v4 M506.4 17 h3.6 M506.4 18.7 h3.6" stroke="#15171c" stroke-width="1.1" fill="none"/>
<g stroke="#7a8096" fill="none"><circle cx="571.4" cy="13.4" r="6" stroke-width="1.25"/><path d="M575.8 17.9 L579.9 21.9" stroke-width="1.5"/><path d="M568.5 13.4 h5.8 M571.4 10.5 v5.8" stroke-width="1.25"/></g>
<g stroke="#7a8096" fill="none"><circle cx="633.6" cy="13.4" r="6" stroke-width="1.25"/><path d="M638.0 17.9 L642.1 21.9" stroke-width="1.5"/><path d="M630.7 13.4 h5.8" stroke-width="1.25"/></g>
<rect x="832" y="4" width="20" height="20" fill="#1c1d21"/><path d="M839.5 8.5 L846 14 L839.5 19.5" stroke="#8a90a8" stroke-width="1.5" fill="none"/>
<g fill="#a7b1cc"><path d="M710 41 L715.5 37 V39.5 H722 V43 H715.5 V45.5 Z"/><path d="M749 41 L743.5 37 V39.5 H737 V43 H743.5 V45.5 Z"/></g></svg>
<div class="t tb" style="left:15px;">日<i>K</i></div>
<div class="t tb" style="left:48px;"><i>1</i>分</div>
<div class="t tb" style="left:79px;"><i>5</i>分</div>
<div class="t tb" style="left:112px;"><i>15</i>分</div>
<div class="t tb" style="left:149px;"><i>30</i>分</div>
<div class="t tb" style="left:187px;"><i>60</i>分</div>
<div class="t tb" style="left:226px;"><i>4</i>时</div>
<div class="t tb" style="left:258px;">周<i>K</i></div>
<div class="t tb" style="left:322px;">自定义</div>
<div class="t tb" style="left:391px;">画线</div>
<div class="t tb" style="left:457px;">叠加</div>
<div class="t tb" style="left:521px;">套利</div>
<div class="t tb" style="left:584px;">放大</div>
<div class="t tb" style="left:647px;">缩小</div>
<div class="t tb" style="left:290px;color:#1e90ff;">月<i>K</i></div>
<div class="t " style="left:4px;top:33px;">现货黄金 (月线)</div>
<div class="t " style="left:5px;top:53px;">集金策略 <span style="letter-spacing:-0.75px;margin-left:0.5px">JJCL</span></div>
<div class="t " style="left:5px;top:370px;">随机指标</div>
<div class="t " style="left:58px;top:370px;letter-spacing:-0.3px">KDJ(9,3,3)</div>
<div class="t " style="left:119.5px;top:370px;">K:88.04<span class="ar">↑</span></div>
<div class="t " style="left:172.5px;top:370px;color:#ff00ff">D:82.36<span class="ar">↑</span></div>
<div class="t " style="left:226px;top:370px;color:#00ff00">J:99.42<span class="ar">↑</span></div>
<div class="bt" style="left:584px;width:48px;">改参数</div>
<div class="bt" style="left:635px;width:67px;">隐藏主指标</div>
<div class="bt" style="left:704px;width:24px;"></div>
<div class="bt" style="left:730px;width:24px;"></div>
<div class="bt" style="left:756px;width:38px;">说明</div>
<div class="bt" style="left:683px;width:48px;top:370px;">改参数</div>
<div class="bt" style="left:734px;width:37px;top:370px;">说明</div>
<div class="bt" style="left:774px;width:20px;top:370px;">X</div>
<div class="ax" style="top:83px;">1900.00</div>
<div class="ax" style="top:191px;">1500.00</div>
<div class="ax" style="top:245px;">1300.00</div>
<div class="ax" style="top:299px;">1100.00</div>
<div class="ax" style="top:377px;">108.67</div>
<div class="ax" style="top:417px;">54.50</div>
<div class="ax" style="top:457px;">0.33</div>
<div class="t " style="left:804.5px;top:141.5px;">1685.19</div>
<div class="t " style="left:181px;top:97px;">1920.80</div>
<div class="t " style="left:19px;top:328px;">986.71</div>
<div class="t g" style="left:161px;top:220px;color:#ff0000">多</div>
<div class="t g" style="left:287px;top:118px;color:#00f400">平多</div>
<div class="t g" style="left:435px;top:234px;color:#00f400">空</div>
<div class="t g" style="left:627px;top:252px;color:#00f400">空</div>
<div class="t g" style="left:580px;top:280px;color:#ff0000">平空</div>
<div class="t g" style="left:676px;top:296px;color:#ff0000">平空</div>
</div></body></html>
